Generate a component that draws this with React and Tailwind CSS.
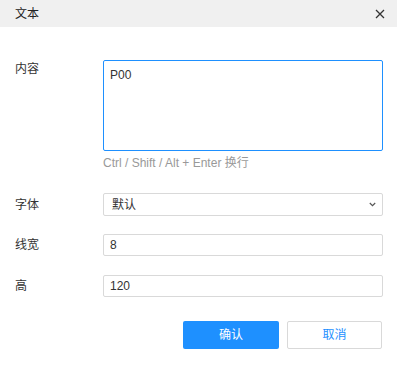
function Row({ label, children, alignTop }) {
  return (
    <div className={`flex ${alignTop ? 'items-start' : 'items-center'}`}>
      <div className={`w-[88px] shrink-0 text-[#333] ${alignTop ? 'pt-[1px]' : ''}`}>{label}</div>
      <div className="w-[280px]">{children}</div>
    </div>
  );
}

export default function App() {
  return (
    <div
      className="w-[397px] h-[365px] bg-white text-[12px] leading-[16px] text-[#333]"
      style={{ fontFamily: '"Liberation Sans", "Noto Sans CJK SC", sans-serif' }}
    >
      <div className="flex h-[27px] items-center justify-between bg-[#f0f0f0] pl-[15px] pr-[12px]">
        <span className="text-[#222]">文本</span>
        <svg width="10" height="10" viewBox="0 0 10 10" className="mr-[0px]">
          <path d="M1 1L9 9M9 1L1 9" stroke="#333" strokeWidth="1.3" />
        </svg>
      </div>

      <div className="pl-[15px] pt-[33px]">
        <Row label="内容" alignTop>
          <div className="h-[91px] rounded-[2px] border border-[#1e90ff] px-[6px] pt-[6px]">P00</div>
          <div className="mt-[4px] text-[#999]">Ctrl / Shift / Alt + Enter 换行</div>
        </Row>

        <div className="mt-[22px]">
          <Row label="字体">
            <div className="flex h-[23px] items-center justify-between rounded-[2px] border border-[#d9d9d9] pl-[8px] pr-[6px]">
              <span>默认</span>
              <svg width="7" height="5" viewBox="0 0 7 5">
                <path d="M0.8 1L3.5 3.6L6.2 1" fill="none" stroke="#555" strokeWidth="1.2" />
              </svg>
            </div>
          </Row>
        </div>

        <div className="mt-[18px]">
          <Row label="线宽">
            <div className="flex h-[22px] items-center rounded-[2px] border border-[#d9d9d9] px-[6px]">8</div>
          </Row>
        </div>

        <div className="mt-[19px]">
          <Row label="高">
            <div className="flex h-[22px] items-center rounded-[2px] border border-[#d9d9d9] px-[6px]">120</div>
          </Row>
        </div>
      </div>

      <div className="mt-[24px] flex justify-end gap-[8px] pr-[15px]">
        <button className="h-[28px] w-[96px] rounded-[2px] bg-[#1e90ff] text-white">确认</button>
        <button className="h-[28px] w-[95px] rounded-[2px] border border-[#d9d9d9] bg-white text-[#1e90ff]">取消</button>
      </div>
    </div>
  );
}
